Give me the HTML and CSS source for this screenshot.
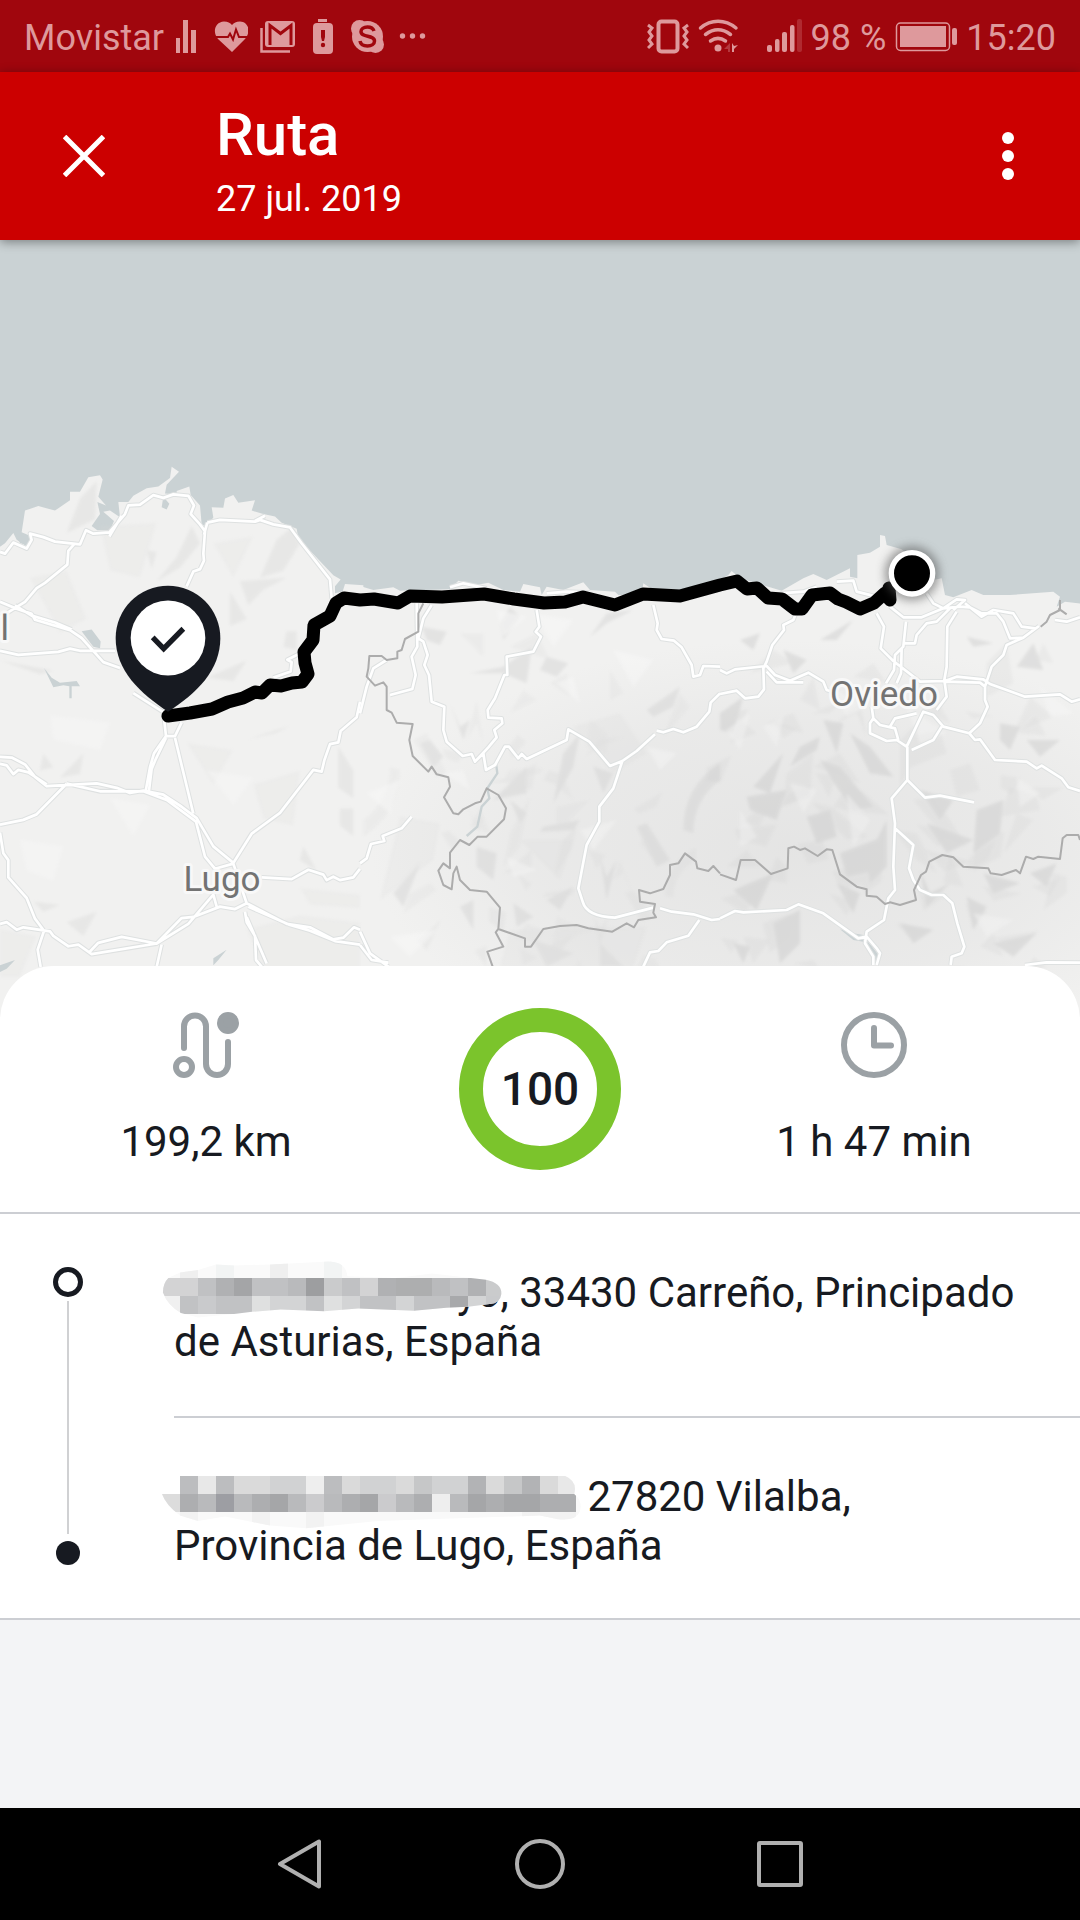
FILE: index.html
```html
<!DOCTYPE html>
<html lang="es">
<head>
<meta charset="utf-8">
<meta name="viewport" content="width=device-width, initial-scale=1">
<title>Ruta</title>
<link rel="stylesheet" href="styles.css">
</head>
<body>
<div class="status">
  <div class="status-group">
    <span class="status-text">Movistar</span>
    <svg width="20" height="36" viewBox="177 18 20 36" fill="currentColor"><path d="M177 38h4v15h-4zM184 20h5v33h-5zM192 30h5v23h-5z"/></svg>
    <svg width="40" height="36" viewBox="209 18 40 36"><path fill="currentColor" d="M233 52L219 39C213 32 216 22 225 21.500C229 21.500 231 23 233 25C235 23 237 21.500 241 21.500C250 22 252 32 246 39Z"/><path d="M215 37h14l2-3.500 3 6 3-10 3 7.500h10" fill="none" stroke="#a0060d" stroke-width="2"/></svg>
    <svg width="36" height="36" viewBox="260 18 36 36"><path fill="none" stroke="currentColor" stroke-width="2.500" d="M261.500 28v23.500H290"/><rect x="265" y="21" width="30" height="26" rx="3" fill="currentColor"/><path d="M270 45V25.500l10.500 8 10.500-8V45" fill="none" stroke="#a0060d" stroke-width="3"/></svg>
    <svg width="26" height="36" viewBox="308 18 26 36"><rect x="318" y="19" width="9" height="3" fill="currentColor"/><rect x="313" y="23" width="20" height="31" rx="4" fill="currentColor"/><path d="M321 30h4v7l-1 4h-2l-1-4z" fill="#a0060d"/><circle cx="323" cy="45" r="2.200" fill="#a0060d"/></svg>
    <svg width="38" height="36" viewBox="346 18 38 36"><g fill="currentColor"><circle cx="367.500" cy="36.500" r="15.500"/><circle cx="359.500" cy="28.500" r="8.500"/><circle cx="375.500" cy="44.500" r="8.500"/></g><path d="M374 31c-1-3-3.500-4-6.500-4-4 0-6.500 2-6.500 4.500 0 6.500 13.500 3 13.500 9.500 0 3-3 5-7 5s-7-2-7.500-5" fill="none" stroke="#a0060d" stroke-width="3.500"/></svg>
    <svg width="32" height="36" viewBox="396 18 32 36" fill="currentColor"><circle cx="402.500" cy="36" r="2.700"/><circle cx="412.500" cy="36" r="2.700"/><circle cx="422.500" cy="36" r="2.700"/></svg>
  </div>
  <div class="status-group status-group-end">
    <svg width="42" height="36" viewBox="651 18 42 36" fill="none" stroke="currentColor"><rect x="662.500" y="21.500" width="19" height="30" rx="3" stroke-width="4"/><path stroke-width="3" d="M652 25l4 3-3 4 3 4-3 4 3 4-4 4M692 25l-4 3 3 4-3 4 3 4-3 4 4 4"/></svg>
    <svg width="60" height="36" viewBox="702 18 60 36"><g fill="none" stroke="currentColor" stroke-width="3.500" stroke-linecap="round"><path d="M704.500 28C715 19 729 19 740 28M709.500 34.500c8-6 17-6 25 0M714.500 41c5-3.500 10-3.500 15 0"/></g><circle cx="722" cy="48" r="3.500" fill="currentColor"/><path fill="currentColor" d="M736 43v9h2v-3l4-4-4 1z"/><path fill="currentColor" opacity=".35" d="M728 49l6-6v9h-2v-3z"/></svg>
    <svg width="35" height="36" viewBox="770 18 35 36" fill="currentColor"><rect x="770" y="45" width="5" height="7" rx="2"/><rect x="778" y="39" width="4.500" height="13" rx="2"/><rect x="785" y="32" width="5" height="20" rx="2"/><rect x="793" y="25" width="4.500" height="27" rx="2"/><rect x="800" y="19" width="5" height="33" rx="2" opacity=".25"/></svg>
    <span class="status-text">98 %</span>
    <svg width="62" height="36" viewBox="895 18 62 36"><rect x="896.500" y="23" width="53" height="27.500" rx="4" fill="none" stroke="currentColor" stroke-width="1.500"/><rect x="900" y="26" width="46" height="21" fill="currentColor"/><rect x="952" y="28" width="5" height="17" rx="2" fill="currentColor"/></svg>
    <span class="status-text">15:20</span>
  </div>
</div>

<header class="appbar">
  <button class="icon-button" type="button" aria-label="Cerrar">
    <svg width="42" height="42" viewBox="0 0 42 42" stroke="#fff" stroke-width="5"><path d="M1.500 1.500l39 39M40.500 1.500l-39 39"/></svg>
  </button>
  <div class="appbar-text">
    <h1 class="title">Ruta</h1>
    <p class="date">27 jul. 2019</p>
  </div>
  <button class="icon-button" type="button" aria-label="Más opciones">
    <svg width="12" height="48" viewBox="0 0 12 48" fill="#fff"><circle cx="6" cy="6" r="6"/><circle cx="6" cy="24" r="6"/><circle cx="6" cy="42" r="6"/></svg>
  </button>
</header>

<main class="content">
  <svg class="map" viewBox="0 240 1080 780" preserveAspectRatio="xMidYMin slice" role="img" aria-label="Mapa de la ruta">
    <defs>
      <filter id="soft" x="-5%" y="-5%" width="110%" height="110%"><feGaussianBlur stdDeviation="4"/></filter>
      <filter id="glow" x="-60%" y="-60%" width="220%" height="220%"><feGaussianBlur stdDeviation="14"/></filter>
      <radialGradient id="range"><stop offset="0" stop-color="#d8d8d8" stop-opacity=".5"/><stop offset=".6" stop-color="#dcdcdc" stop-opacity=".35"/><stop offset="1" stop-color="#dcdcdc" stop-opacity="0"/></radialGradient>
    </defs>
    <rect y="240" width="1080" height="780" fill="#cad2d4"/>

    <!-- land -->
    <g fill="#f1f1f0">
      <path transform="translate(0 440) scale(.33333 .34439)" d="M0 310L15 300 40 270 50 290 85 312 95 280 65 268 75 205 115 192 165 205 210 175 210 150 240 150 265 108 300 102 308 115 295 165 318 190 292 180 300 215 275 250 292 262 330 262 342 235 310 208 330 205 360 224 355 180 385 180 400 162 440 140 475 135 510 110 515 78 537 92 500 130 495 155 530 158 530 148 568 135 572 160 600 190 605 245 620 250 640 225 635 195 670 197 675 170 700 160 715 182 765 175 755 205 790 215 825 222 845 240 890 258 895 285 1000 393 1022 405 1005 425 1005 445 1028 440 1035 418 1090 422V1800H0Z"/>
      <path transform="translate(360 540) scale(.33333)" d="M-8 136L40 150 100 142 120 152 270 148 295 122 350 135 385 128 430 150 480 155 490 132 540 142 545 165 560 140 610 150 670 127 690 150 765 155 775 165 845 165 850 130 880 150 935 147 950 155 1000 155 1085 125V1500H-8Z"/>
      <path transform="translate(720 500) scale(.33333)" d="M-8 245L25 225 35 213 60 235 150 262 185 272 250 235 280 222 320 240 390 205 390 230 412 235 412 165 450 158 480 140 480 105 495 108 500 135 545 148 600 200 640 240 665 235 675 285 700 292 755 270 790 285 870 285 1000 275 1020 290 1010 320 1035 305 1090 312V1600H-8Z"/>
    </g>

    <!-- relief -->
    <ellipse cx="790" cy="850" rx="420" ry="210" fill="url(#range)"/>
    <g transform="translate(0 440) scale(.33333 .34439)" filter="url(#soft)" fill="#d9d9d8" opacity=".4">
      <path id="relief-west" d="M240 170L290 120 285 230 200 270ZM440 320L470 325 455 375ZM575 250L600 300 540 370 470 410 530 340ZM720 410L860 400 790 435 745 480ZM780 400L830 290 880 250 900 300 850 380ZM860 555H890V610L850 600ZM690 440L740 520 690 540ZM620 690L740 640 700 700ZM1015 890L1060 960 1060 1040 1015 1010ZM1020 1070H1060V1150L1020 1120ZM910 1180L950 1250 900 1220ZM180 980L250 910 240 970ZM130 910L160 950 120 960ZM200 1400L290 1370 250 1440ZM100 1340L180 1350 130 1370ZM740 870L870 830 830 850ZM0 640L160 670 120 680Z"/>
      <path d="M0 1420L110 1440 60 1560 0 1560ZM740 1420L900 1380 1080 1400V1600H820ZM900 1300L1080 1320V1360L930 1350ZM90 400L200 380 260 520 180 560ZM300 250L470 240 420 400 330 380ZM640 300L760 280 700 400ZM560 880L700 900 640 1000ZM760 1000L900 960 880 1120 790 1100Z" opacity=".45"/>
      <path fill="#fff" opacity=".5" d="M150 800L330 820 300 900 160 870ZM620 960L760 980 700 1060ZM330 1040L450 1060 400 1150ZM60 1160L190 1180 160 1280 80 1250Z"/>
    </g>
    <g transform="translate(360 540) scale(.33333)" filter="url(#soft)" fill="#cfcfcf" opacity=".4">
      <path id="relief-mid" d="M185 260L260 275 240 315 200 300ZM420 250L450 200 480 230 430 300ZM330 400L430 380 515 320 500 430 430 400ZM560 350L625 370 590 410 540 390ZM690 290L740 220 820 210 740 250ZM860 510L960 440 940 500 880 530ZM270 490L300 560 330 540 310 600ZM180 610L210 600 250 650 220 680ZM610 640L660 580 640 680 580 790ZM430 750L500 680 500 760 400 780ZM550 860L660 840 640 870 540 875ZM450 780L500 820 480 850ZM830 860L860 850 930 960 890 980ZM720 950L740 1010 770 960 740 1080ZM560 1080L640 1040 600 1110ZM350 920L410 940 400 1020 350 980ZM300 1100L340 1080 340 1170ZM460 1090L520 1130 470 1160ZM970 870Q970 740 1080 670V720Q1000 780 1000 880ZM700 680L760 700 730 760ZM180 970L130 1100 100 1060ZM520 1200L640 1240 560 1280ZM720 1210L790 1280H720Z"/>
      <use href="#relief-mid" transform="translate(1090 1560) rotate(180)" opacity=".4"/>
      <use href="#relief-mid" transform="translate(90 440) scale(.85 .72)" opacity=".45"/>
      <path d="M120 830L240 850 220 960 60 1080ZM450 1170L860 1160 820 1280H420ZM640 560L780 520 860 640 760 700ZM480 900L640 900 600 1020Z" opacity=".35"/>
      <path fill="#fff" opacity=".6" d="M410 210L500 230 430 290ZM590 430L640 410 660 490ZM20 760L120 720 90 820ZM250 700L310 690 330 750ZM660 870L770 840 700 930ZM860 620L950 640 900 690ZM440 950L530 990 460 1010ZM90 1190L230 1170 150 1250ZM520 220L640 240 580 320ZM760 330L880 360 820 440Z"/>
    </g>
    <g transform="translate(720 500) scale(.33333)" filter="url(#soft)" fill="#c4c4c4" opacity=".38">
      <path id="relief-east" d="M60 420L120 400 100 450ZM190 450L260 480 220 520ZM300 420L400 360 350 420ZM0 640L70 590 40 700 0 690ZM210 800L240 740 300 710 290 750ZM100 860L190 760 150 880ZM310 660L370 670 350 760ZM300 780L360 800 460 920 400 930 350 860ZM390 700L450 740 520 830 450 820ZM260 950L330 930 350 1010 290 1030ZM80 890L200 870 170 960 90 930ZM440 1080L500 960 500 1100 450 1150ZM360 1060L490 1010 470 1110 380 1130ZM600 870L700 900 660 960ZM620 970L760 1020 680 1060ZM770 930L850 900 840 1000 760 1060ZM840 670L900 680 870 750 840 720ZM920 720L1020 720 960 770ZM890 500L940 430 970 510ZM740 410L820 430 760 440ZM600 1110L630 1180 690 1150 620 1220ZM40 1170L160 1120 110 1230ZM160 1270L240 1230 240 1330 180 1390ZM350 1150L420 1180 400 1240ZM820 1330L950 1300 880 1370ZM790 1120L900 1150 820 1180ZM930 1120L1010 1090 980 1160ZM740 1190L800 1220 760 1290ZM540 1270L640 1290 580 1330ZM40 1330L90 1340 70 1390Z"/>
      <use href="#relief-east" transform="translate(1040 1820) rotate(180)" opacity=".4"/>
      <use href="#relief-east" transform="translate(-40 330) scale(1.050 .74)" opacity=".4"/>
      <path fill="#fff" opacity=".55" d="M20 690L90 640 60 750ZM130 680L190 650 170 740ZM210 850L290 870 250 940ZM330 560L440 620 380 650ZM560 620L680 700 600 730ZM960 560L1060 640 990 650ZM380 880L450 960 400 1040ZM890 830L960 880 900 920ZM60 930L110 1010 60 1040ZM760 1240L880 1260 800 1310Z"/>
    </g>

    <!-- inland water -->
    <g transform="translate(0 440) scale(.33333 .34439)" fill="#cad2d4">
      <path d="M490 165L508 185 500 202 485 195ZM245 555L275 550 302 585 300 605 280 600ZM132 662L155 690 180 705 230 700 240 715 215 715 215 750 208 750 208 715 190 712 160 718ZM50 272L85 285 90 305 60 300ZM640 1505L680 1480 655 1510 640 1525ZM0 1525L45 1510 20 1535 0 1545Z"/>
    </g>
    <path transform="translate(360 540) scale(.33333)" d="M408 670L412 700 382 745 388 775 365 800 352 860 320 888" fill="none" stroke="#cad2d4" stroke-width="7"/>
    <path transform="translate(720 500) scale(.33333)" d="M360 1288L400 1300 430 1305 430 1325 400 1320ZM440 1320L480 1370 470 1395 450 1350Z" fill="#cad2d4"/>

    <!-- roads: grey casing under a white line -->
    <g class="road-casing">
      <use href="#roads-west"/><use href="#roads-mid"/><use href="#roads-east"/>
    </g>
    <g class="road">
      <path id="roads-west" transform="translate(0 440) scale(.33333 .34439)" d="M0 325L15 330 40 298 80 315 95 290 90 272 130 282 165 295 240 303 258 262 280 272 328 268 375 215 385 190 420 188 460 160 490 168 520 158 565 162 582 190 572 215 600 245 615 265 610 330 612 350 600 375 580 382 560 425M328 280L365 220M222 303L205 322 202 362 135 415 110 430 75 470 0 515M0 470L50 490 95 505 105 522 210 552 245 575 310 645 360 662M45 480L95 510 165 530 215 550M0 612L55 624 175 615 210 606 240 612H345M622 240L660 232 765 237 780 232 820 245 870 254 905 300 990 405 995 460M765 235L795 220M820 690L872 672 875 645 862 638 895 622M400 735L490 790 498 860 462 910 450 950 437 1020M545 820L525 860 498 860M498 865L468 925 455 955 447 1018M525 865L580 1085M0 920L35 922 75 942 105 978 140 1005 290 997 350 1010 390 1025 430 1018 490 1030 545 1065 590 1098 640 1180 700 1228M0 940L20 945 40 970 55 958 85 965 140 1000M200 998L300 1020 430 1020 500 1045 588 1108 615 1210 645 1245M200 998L110 1087 70 1103 0 1117M0 1140L10 1200 25 1220V1270L80 1330 105 1390 132 1425 113 1480 122 1530M0 1405L20 1400 50 1422 70 1415 150 1427 160 1440 205 1470 235 1465 275 1493 470 1462 545 1388 580 1385 660 1355 705 1362 740 1345 860 1405 930 1415 1000 1450 1030 1445 1062 1415 1080 1422M270 1485L295 1460 365 1443 470 1462 565 1405 640 1320 650 1355M485 1465L470 1530M735 1370L740 1400 765 1440 768 1510 790 1535M740 1385L800 1520M745 1355L870 1408 930 1425 1005 1455 1080 1465M700 1228L755 1143 840 1083 940 958 965 963 973 930 990 883 1015 878 1022 845 1070 805 1080 760M785 1270L875 1275 925 1248 970 1262 980 1278 1000 1268 1020 1278 1060 1270 1080 1245M645 1245L700 1230 740 1345M622 240L612 275"/>
      <path id="roads-mid" transform="translate(360 540) scale(.33333)" d="M0 520L20 440 40 385 80 360M170 190L172 320 155 350 167 405 157 447 90 465M215 195L190 235 175 295 190 305 203 345 193 375 207 405 215 485 253 500 250 570 260 605 308 648 335 642 345 665 385 622 410 592 403 570 427 550 425 535 385 533 383 510 405 475 433 405H442L440 350 520 335 543 290 527 275 538 260 530 210M345 665L370 640 378 690 405 675 435 620 447 620 475 655 485 642 500 657 620 600 625 568 688 605 750 678 787 663 830 633 885 583M787 663L760 745 718 800V845L680 915 655 1045 668 1085Q680 1130 765 1133L880 1103M880 195L893 250 890 270 905 297 942 302 965 322 995 375 1000 410 1020 405 1030 378 1080 380M890 572L910 577 940 567 970 577 1010 560 1048 515 1052 488 1080 460M900 1105L935 1115 1000 1123 1055 1140 1080 1137M1018 1140L985 1187 920 1207 895 1233 870 1237 850 1280M155 830L125 865 68 888 73 903 33 912 20 955 0 970M0 1175L30 1240 85 1280M0 1215L35 1260 85 1268M270 142L310 130 380 145M560 160L620 155 690 158"/>
      <path id="roads-east" transform="translate(720 500) scale(.33333)" d="M0 510L20 520 45 508 140 498 165 525 210 542 265 518 310 545 320 570 350 580M0 582L50 572 75 595 115 590 132 568 130 505 140 485 157 435 192 390 190 375 220 360 230 335M140 515L170 547H250M180 280L250 275 290 260M350 245L400 242 410 275 470 290M510 320L550 352 605 352 670 325 720 320 750 322 785 340 830 340 850 365 870 415 910 413 957 378M470 340L492 380 482 445 520 483 600 545 675 543 710 530 790 538 810 552 915 590 1020 583 1055 605 1080 598M558 365L550 440 525 465 522 510 498 550M550 430H585L590 405 620 370 650 365 690 325M620 280L640 310 670 325 710 298 735 300 700 330M545 445L543 520 530 550M710 335L682 380 680 500 673 540 680 590 650 630M675 545L780 548 795 560M795 560L815 500 850 465 860 435 910 413M735 310L785 350 820 330 880 340 905 380 945 385M795 560L795 600 803 620 780 670 748 700 670 680 640 645 610 635 560 740 530 720 500 723 450 700 450 670 460 655 455 620M460 655L480 675 525 685 535 720M510 680L525 655 590 640M665 680L640 720 575 750M562 740V840L515 895 525 970 520 1100 525 1170 505 1195 492 1260 440 1295 435 1330 460 1370V1395M562 840L615 893 660 887 762 907M525 985L580 1035 567 1105 580 1140 600 1170 635 1185H670L697 1210 712 1270 733 1340 725 1360 695 1370 692 1395M748 700L765 720 780 718 825 780 920 785 950 805 965 797 1025 835 1045 862 1080 873M0 1255L45 1233 70 1237 200 1230 235 1213 310 1240 415 1315 440 1310 470 1345 480 1360 470 1395M915 1395L980 1387 1080 1388M1005 360L1040 365 1080 352"/>
    </g>

    <!-- region borders -->
    <g class="border">
      <path transform="translate(360 540) scale(.33333)" d="M190 190L175 220V275L135 297 125 330 112 335V355L80 360 65 348H28L25 385 20 410 45 437 70 427 80 440V510L95 518 110 548 158 552 148 600 158 648 205 695 215 680 230 703 265 712 270 740 252 772 280 820 295 823 310 808 345 790 362 785 380 745 415 765 438 805 432 838 380 890H353L328 915 300 900 270 938V985L250 970 235 992 250 1035 275 1048 280 1000 290 980 300 1020 330 1050 380 1055 420 1103 415 1167 495 1195V1220H513L550 1167 600 1158 650 1155 685 1165 757 1175 800 1150 822 1162 835 1140 888 1132 880 1118 885 1092 840 1085 837 1050 870 1060 910 1047 930 1005V975L955 970 975 940 1008 965 1012 985 1045 993 1060 978 1080 1000M415 1167L407 1177 430 1220 382 1235 398 1280 430 1400"/>
      <path transform="translate(720 500) scale(.33333)" d="M0 1123L48 1140 62 1080 105 1080 153 1122 203 1105 205 1045 222 1040 240 1050 255 1045 293 1068 320 1048 337 1050 360 1123 410 1160 440 1168V1187L470 1190 495 1212 510 1207 540 1215 588 1200 582 1170 603 1125 618 1115 628 1085 667 1065 700 1072 730 1100 805 1105 812 1120 845 1125 888 1110 900 1120 918 1070 940 1077 955 1070 1020 1077 1028 1015 1040 1005H1075L1080 1020M962 380L980 365 990 345 1020 330V300M1015 325L1040 343"/>
    </g>

    <g class="map-label">
      <text x="222" y="891" text-anchor="middle">Lugo</text>
      <text x="884" y="706" text-anchor="middle">Oviedo</text>
      <text x="9" y="640" text-anchor="end">l</text>
    </g>

    <!-- driven route -->
    <path class="track" d="M168 716L190 713 212 709 228 702 243 698 255 692 262 693 270 685 281 686 292 683 302 682 308 674 305 663 304 652 313 640 314 625 330 616 336 603 344 598 360 600 374 599 398 603 410 596 442 597 484 594 514 599 544 603 565 602 583 597 615 605 643 594 680 596 720 585 737 581 747 589 757 588 768 598 782 599 795 609 802 609 812 595 830 593 838 599 846 602 860 609 874 603 885 593 890 600 889 588"/>

    <g transform="translate(0 440) scale(.33333 .34439)">
      <path fill="#171a21" d="M504 789C420 735 347 670 347 575A157 152 0 0 1 661 575C661 670 590 735 504 789Z"/>
      <ellipse cx="504" cy="575" rx="112" ry="109" fill="#fff"/>
      <path d="M458 573L491 606 550 548" fill="none" stroke="#171a21" stroke-width="16"/>
    </g>
    <g transform="translate(720 500) scale(.33333)">
      <circle cx="576" cy="220" r="82" fill="#555" opacity=".55" filter="url(#glow)"/>
      <circle cx="576" cy="220" r="62" stroke="#fff" stroke-width="16"/>
    </g>
  </svg>

  <section class="sheet">
    <div class="stats">
      <div class="stat">
        <svg width="66" height="66" viewBox="0 0 66 66" fill="none" stroke="#9ba1a5" stroke-width="6" stroke-linecap="round"><path d="M11 36V14.500a11 11 0 0 1 22 0V52a11 11 0 0 0 22 0V30"/><circle cx="11" cy="55" r="8"/><circle cx="55" cy="11" r="8" fill="#9ba1a5"/></svg>
        <p>199,2 km</p>
      </div>
      <div class="score">100</div>
      <div class="stat">
        <svg width="66" height="66" viewBox="0 0 66 66" fill="none" stroke="#9ba1a5" stroke-width="6"><circle cx="33" cy="33" r="30"/><path d="M33 16V33.500H50" stroke-linecap="round" stroke-linejoin="round"/></svg>
        <p>1 h 47 min</p>
      </div>
    </div>

    <div class="route">
      <div class="timeline">
        <span class="node node-start"></span>
        <span class="line"></span>
        <span class="node node-end"></span>
      </div>
      <ol class="stops">
        <li class="stop"><span class="redacted redacted-start"><svg class="mosaic mosaic-start" width="342" height="72" viewBox="0 0 19 4" shape-rendering="crispEdges" aria-hidden="true">
          <clipPath id="blot-a"><path d="M.05 1.800Q.05 1.300.35 1L1 .7 2 .55 3 .25 4 .3 6 .25 9 .1Q10.200 0 10.300.9L13 1 15 .75 18 1.100Q18.900 1.300 18.850 1.900Q18.800 2.400 18.200 2.450L17 2.600 15.800 2.650 14 2.820 10.900 2.700 9 2.850 6.600 2.750 5 2.880 4 3 2 3.200 1.050 2.950Q.3 2.500.05 1.800Z"/></clipPath>
          <g clip-path="url(#blot-a)">
            <rect width="19" height="4" fill="#fafafa"/>
            <path fill="#efefef" d="M1 0h1v1H1zM6 0h1v1H6z"/><path fill="#f2f4f4" d="M3 0h1v1H3zM9 0h1v1H9z"/>
            <path fill="#d3d3d4" d="M0 1h2v1H0zM11 1h1v1h-1z"/><path fill="#c0c1c3" d="M2 1h1v1H2zM5 1h2v1H5zM10 1h1v1h-1zM16 1h1v1h-1z"/><path fill="#b0b1b3" d="M3 1h1v1H3zM12 1h1v1h-1zM17 1h1v1h-1z"/><path fill="#a4a5a7" d="M4 1h1v1H4z"/><path fill="#b9babc" d="M7 1h1v1H7zM15 1h1v1h-1z"/><path fill="#9d9ea0" d="M8 1h1v1H8z"/><path fill="#cacbcc" d="M9 1h1v1H9zM18 1h1v1h-1z"/><path fill="#adaeaf" d="M13 1h2v1h-2z"/>
            <path fill="#f0f0f0" d="M0 2h1v2H0z"/><path fill="#c1c2c4" d="M1 2h1v1H1zM3 2h2v1H3zM8 2h1v1H8zM11 2h2v1h-2zM14 2h2v1h-2z"/><path fill="#c9cacc" d="M2 2h1v1H2zM18 2h1v1h-1z"/><path fill="#dfe0e0" d="M5 2h1v1H5zM9 2h1v1H9z"/><path fill="#d3d4d5" d="M6 2h2v1H6zM10 2h1v1h-1zM13 2h1v1h-1zM17 2h1v1h-1z"/><path fill="#a8a9ab" d="M16 2h1v1h-1z"/>
          </g></svg></span>yo, 33430 Carreño, Principado de Asturias, España</li>
        <li class="stop"><span class="redacted redacted-end"><svg class="mosaic mosaic-end" width="432" height="72" viewBox="0 0 24 4" shape-rendering="crispEdges" aria-hidden="true">
          <clipPath id="blot-b"><path d="M1 1H22.400Q23.100 1.300 22.900 2Q23.400 2.400 23.200 3Q23 3.500 22 3.400L21 3.200 12 3.500 8 3.900 6 3.750 3.500 3.250 2 3.500 1 3.200Q.2 2.600 0 2H1Z"/></clipPath>
          <g clip-path="url(#blot-b)">
            <rect width="24" height="4" fill="#f9f9f9"/>
            <path fill="#f2f2f2" d="M1 3h1v1H1zM5 3h1v1H5zM8 3h1v1H8zM20 3h3v1h-3z"/>
            <path fill="#bcbdbf" d="M1 1h1v1H1zM3 1h1v1H3zM9 1h1v1H9z"/><path fill="#e8e8e8" d="M2 1h1v1H2zM22 1h1v1h-1z"/><path fill="#dadada" d="M4 1h2v1H4zM10 1h1v1h-1zM13 1h1v1h-1zM18 1h1v1h-1zM21 1h1v1h-1z"/><path fill="#d1d2d3" d="M6 1h2v1H6zM11 1h2v1h-2zM15 1h2v1h-2z"/><path fill="#eee" d="M8 1h1v1H8z"/><path fill="#c6c7c8" d="M14 1h1v1h-1zM19 1h1v1h-1z"/><path fill="#b2b3b5" d="M17 1h1v1h-1zM20 1h1v1h-1z"/>
            <path fill="#dcdcdc" d="M0 2h1v1H0z"/><path fill="#adaeb0" d="M1 2h1v1H1zM5 2h1v1H5zM10 2h1v1h-1zM14 2h1v1h-1zM18 2h1v1h-1zM21 2h2v1h-2z"/><path fill="#b9babc" d="M2 2h1v1H2zM4 2h1v1H4zM7 2h1v1H7zM9 2h1v1H9zM13 2h1v1h-1zM16 2h1v1h-1z"/><path fill="#9d9ea3" d="M3 2h1v1H3z"/><path fill="#a5a6a8" d="M6 2h1v1H6zM11 2h1v1h-1zM17 2h1v1h-1zM19 2h2v1h-2z"/><path fill="#cbcbcd" d="M8 2h1v1H8zM12 2h1v1h-1z"/><path fill="#eee" d="M15 2h1v1h-1z"/>
          </g></svg></span> 27820 Vilalba, Provincia de Lugo, España</li>
      </ol>
    </div>
  </section>
</main>

<nav class="navbar" aria-label="Sistema">
  <button class="nav-button" type="button" aria-label="Atrás"><svg width="50" height="50" viewBox="0 0 50 50"><path d="M44 2.500V47.500L5 25Z"/></svg></button>
  <button class="nav-button" type="button" aria-label="Inicio"><svg width="50" height="50" viewBox="0 0 50 50"><circle cx="25" cy="25" r="23"/></svg></button>
  <button class="nav-button" type="button" aria-label="Recientes"><svg width="50" height="50" viewBox="0 0 50 50"><rect x="4" y="4" width="42" height="42" rx="1"/></svg></button>
</nav>
</body>
</html>
```
FILE: styles.css
```css
* {
  box-sizing: border-box;
}

body {
  margin: 0;
  min-height: 100vh;
  display: flex;
  flex-direction: column;
  background: #f3f4f6;
  color: #171a21;
  font-family: Roboto, "Liberation Sans", sans-serif;
}

h1, p, ol {
  margin: 0;
  padding: 0;
}

button {
  padding: 0;
  border: 0;
  background: none;
  display: flex;
  align-items: center;
  justify-content: center;
}

svg {
  display: block;
  flex: none;
}

/* status bar */
.status {
  height: 72px;
  padding: 0 24px;
  display: flex;
  justify-content: space-between;
  align-items: center;
  background: #a0060d;
  color: #de999c;
  font-size: 36px;
  line-height: 42px;
  white-space: nowrap;
}

.status-group {
  display: flex;
  align-items: center;
  gap: 12px;
}

.status-group-end {
  gap: 9px;
}

.status-text {
  padding-top: 4px;
}

/* app bar */
.appbar {
  position: relative;
  z-index: 1;
  height: 168px;
  display: flex;
  align-items: center;
  background: #c00;
  color: #fff;
  box-shadow: 0 2px 10px rgba(0, 0, 0, .4);
}

.icon-button {
  width: 168px;
  height: 168px;
}

.icon-button:last-child {
  width: 144px;
}

.appbar-text {
  flex: 1;
  display: grid;
  gap: 4px;
  padding: 10px 0 0 48px;
}

.title {
  font-size: 60px;
  line-height: 72px;
  font-weight: 500;
}

.date {
  font-size: 36px;
  line-height: 48px;
}

/* map and sheet */
.content {
  flex: 1;
}

.map {
  width: 100%;
  height: auto;
}

.road-casing, .road, .border, .track {
  fill: none;
  stroke-linejoin: round;
}

.road-casing {
  stroke: #dee1e1;
  stroke-width: 14px;
}

.road {
  stroke: #fff;
  stroke-width: 8px;
}

.border {
  stroke: #acacac;
  stroke-width: 6px;
}

.track {
  stroke: #000;
  stroke-width: 13px;
  stroke-linecap: round;
}

.map-label {
  font-size: 35px;
  fill: #737373;
  stroke: #f8f8f8;
  stroke-width: 6px;
  stroke-linejoin: round;
  paint-order: stroke;
}

.sheet {
  position: relative;
  margin-top: -54px;
  border-radius: 54px 54px 0 0;
  border-bottom: 2px solid #ccced3;
  background: #fff;
}

.stats {
  padding: 42px 39px;
  display: grid;
  grid-template-columns: repeat(3, 1fr);
  justify-items: center;
  border-bottom: 2px solid #ccced3;
}

.stat {
  padding-top: 4px;
  display: flex;
  flex-direction: column;
  align-items: center;
  gap: 39px;
  font-size: 42px;
  line-height: 49px;
}

.score {
  width: 162px;
  height: 162px;
  display: flex;
  align-items: center;
  justify-content: center;
  border: 24px solid #7bc42c;
  border-radius: 50%;
  font-size: 46px;
  font-weight: 500;
}

/* route addresses */
.route {
  display: flex;
}

.timeline {
  width: 136px;
  padding: 53px 0;
  display: flex;
  flex-direction: column;
  align-items: center;
}

.node {
  border-radius: 50%;
}

.node-start {
  width: 30px;
  height: 30px;
  border: 5px solid #171a21;
}

.node-end {
  width: 24px;
  height: 24px;
  background: #171a21;
}

.line {
  flex: 1;
  width: 2px;
  margin: 4px 0 7px;
  background: #d0d1d3;
}

.stops {
  flex: 1;
  padding-left: 38px;
  list-style: none;
}

.stop {
  padding: 54px 54px 50px 0;
  font-size: 42px;
  line-height: 49px;
}

.stop + .stop {
  padding-bottom: 48px;
  border-top: 2px solid #ccced3;
}

.redacted {
  position: relative;
  z-index: 1;
  display: inline-block;
  height: 49px;
  vertical-align: top;
}

.redacted-start {
  width: 283px;
}

.redacted-end {
  width: 403px;
}

.mosaic {
  position: absolute;
  left: -12px;
}

.mosaic-start {
  top: -8px;
}

.mosaic-end {
  top: -14px;
}

/* system navigation */
.navbar {
  height: 112px;
  display: flex;
  align-items: center;
  justify-content: center;
  gap: 120px;
  background: #000;
}

.nav-button {
  width: 120px;
  height: 112px;
  fill: none;
  stroke: #b0b0b0;
  stroke-width: 4px;
  stroke-linejoin: round;
}
```
